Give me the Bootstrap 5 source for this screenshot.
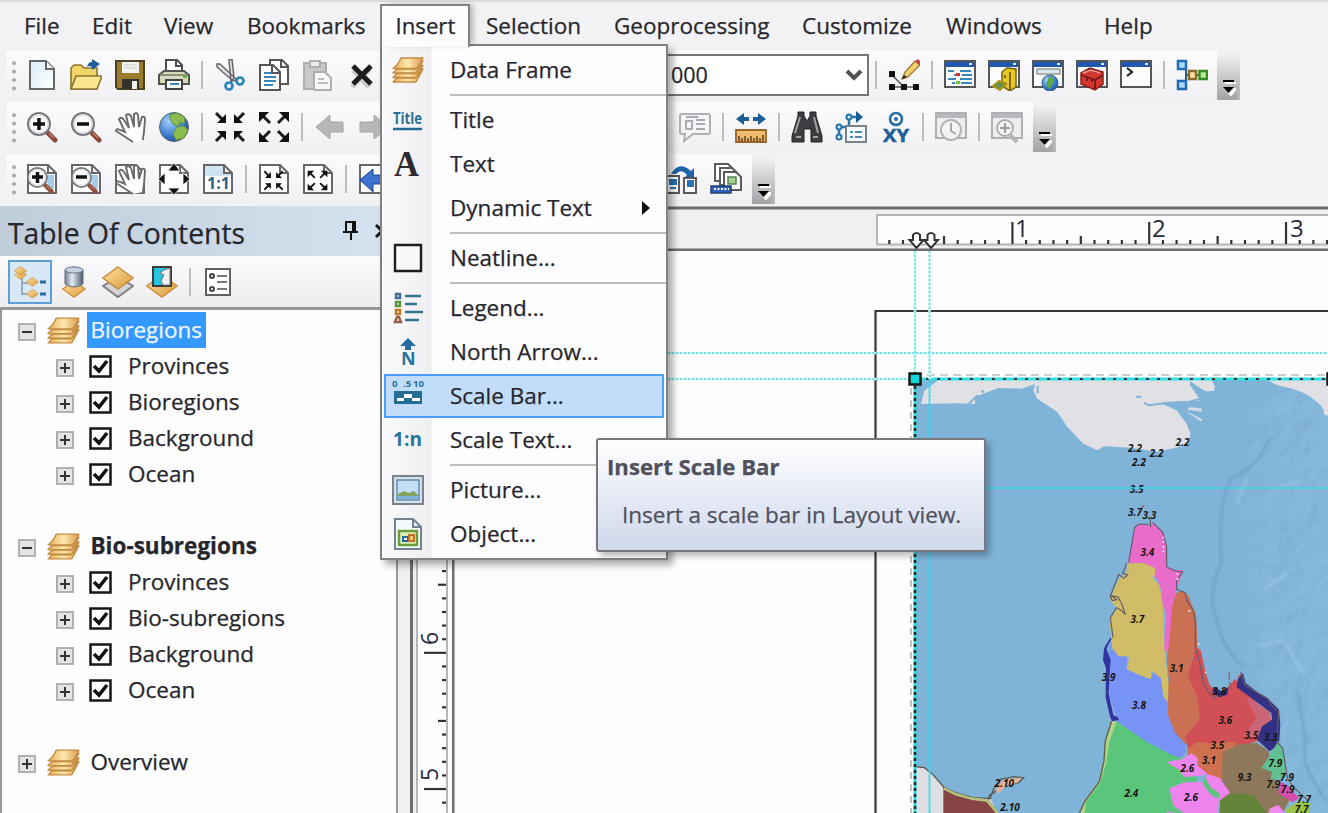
<!DOCTYPE html>
<html lang="en">
<head>
<meta charset="utf-8">
<title>Map layout</title>
<link href="https://cdn.jsdelivr.net/npm/bootstrap@5.3.0/dist/css/bootstrap.min.css" rel="stylesheet">
<style>
body{width:1328px;height:813px;overflow:hidden;background:#f2f1f4;font-family:"Open Sans","Noto Sans",sans-serif;font-size:22.5px;line-height:36px;color:#26262c;white-space:nowrap;-webkit-text-stroke:.25px}
svg{display:block;flex:none}
.app{height:813px;width:1328px;box-shadow:inset 0 2px #dbdadf}
.menubar{height:50px;padding:2px 0 0 24px;display:grid;grid-template-columns:68px 72px 83px 149px 90px 128px 188px 144px 158px 1fr;align-items:center}
.tools{height:52px;padding-left:6px}
.strip{height:50px;background:linear-gradient(#fcfbfd,#f0eff2);border-radius:5px 0 0 5px}
.grip{width:14px;height:32px;background:radial-gradient(circle,#aaaab0 1.7px,transparent 2.2px) 1px 0/14px 8.4px repeat-y}
.ico{width:44px;height:44px;display:flex;align-items:center;justify-content:center}
.ico svg{width:32px;height:32px}
.sp{width:12px;height:28px;background:linear-gradient(#bdbdc2,#bdbdc2) center/2px 100% no-repeat}
.more{width:23px;height:47px;background:linear-gradient(100deg,transparent 85%,#f2f1f455),linear-gradient(#f2f1f4,#a3a3a7);display:flex;align-items:flex-end;justify-content:center}
.combo{width:230px;height:42px;border:2px solid #77777b;background:#fff;font-size:21.5px;line-height:34px}
.work{height:607px}
.toc{width:380px;background:#fdfdfe}
.tochead{height:50px;background:linear-gradient(90deg,#c0cddb,#d5e2f0);font-size:28.3px;padding-left:8px}
.toctools{height:54px;border-bottom:3px solid #96969c;background:linear-gradient(#fbfbfc,#ededf0);padding-left:8px}
.selbox{background:#d9e8f7;border:2px solid #5f9ed6}
.tree{border-left:2px solid #96969c;width:396px;height:504px;background:#fdfdfe;padding-top:2px}
.node{height:36px;display:flex;align-items:center}
.lvl1{padding-left:16px}.lvl2{padding-left:54px}
.lvl1 .lyr{margin:0 7px 0 11px}.lvl2 .chk{margin:1px 12px 0 15px}
.exp{margin-top:4px}
.picked{background:#3399ff;color:#eef6ff}
.nm{padding:0 4px;line-height:36px}
.lvl1 .nm{padding-left:3.5px}
.flyout{position:absolute;left:380px;top:44px;width:288px;height:516px;border:2px solid #828286;background:linear-gradient(90deg,#fcfcfd 3px,#f9f9fb 4px,#efeff2 49px,#fdfcfe 50px);box-shadow:5px 5px 7px #0005;padding:2px 2px 0}
.tab{position:absolute;left:380px;top:4px;width:90px;height:43px;border:2px solid #828286;border-bottom:0;background:#fcfbfd;padding-left:13.5px;line-height:39px;box-shadow:5px -1px 6px -2px #0004;font-size:22.2px}
.mi{height:44px;display:flex;align-items:center;padding-left:8px}
.mi svg{width:32px;height:32px;margin-right:26px}
.rule{height:6px;margin:0 -2px 0 66px;background:linear-gradient(#bdbdc1,#bdbdc1) 0 2px/100% 2px no-repeat}
.hot{background:#c1ddfa;border:2px solid #4a9eff;padding-left:6px;margin-right:0}
.tip{position:absolute;left:596px;top:438px;width:390px;height:114px;border:2px solid #77777d;border-radius:3px;background:linear-gradient(#fff,#e7ebf6 50%,#ced8ea);box-shadow:4px 4px 6px #0004;color:#50505c;padding:9px 0 0 9px}
.tip div+div{margin:12px 0 0 15px}
</style>
</head>
<body>
<svg width="0" height="0" class="position-absolute">
<defs>
<linearGradient id="gold" x2="1" y2="1"><stop stop-color="#ffe2a0"/><stop offset="1" stop-color="#d99a3c"/></linearGradient>
<linearGradient id="gpage" x2="1" y2="1"><stop stop-color="#d8ecf8"/><stop offset="1" stop-color="#fff"/></linearGradient>
<radialGradient id="globe" cx=".35" cy=".3" r=".8"><stop stop-color="#a9d2ff"/><stop offset=".6" stop-color="#3b7ccf"/><stop offset="1" stop-color="#1c4a92"/></radialGradient>
<linearGradient id="cyl"><stop stop-color="#6f7f94"/><stop offset=".4" stop-color="#e3eaf3"/><stop offset="1" stop-color="#4d5a6e"/></linearGradient>
<linearGradient id="sheet" x2="1"><stop stop-color="#e0ac58"/><stop offset=".5" stop-color="#ffe9ae"/><stop offset="1" stop-color="#d5984a"/></linearGradient>
<symbol id="layers" viewBox="0 0 32 32"><g fill="url(#sheet)" stroke="#c48c42" stroke-width="1.300" stroke-linejoin="round"><path d="M1 28l4-4h18q4-3 6-9l2 0q-3 6-7 13z"/><path d="M1 23.500l4-4h19l5-8h2l-7 12z"/><path d="M1 19l4-4h19l5-8h2l-7 12z"/><path d="M1 14.500Q6 11 9 4h22q-3 8-7 10.500z"/></g></symbol>
<symbol id="page" viewBox="0 0 32 32"><path d="M4 2h16l8 8v20H4z" fill="url(#gpage)" stroke="#66666b" stroke-width="2"/><path d="M20 2v8h8" fill="#fff" stroke="#66666b" stroke-width="2"/></symbol>
<symbol id="pagew" viewBox="0 0 32 32"><path d="M2 2h20l8 8v20H2z" fill="#fff" stroke="#66666b" stroke-width="2"/><path d="M22 2v8h8" fill="none" stroke="#66666b" stroke-width="2"/></symbol>
<symbol id="mag" viewBox="0 0 32 32"><path d="M22 22l7 7" stroke="#8d4a3c" stroke-width="5" stroke-linecap="round"/><path d="M23 22l5 5" stroke="#c07c69" stroke-width="1.5"/><circle cx="13" cy="13" r="11" fill="#fbfbfd" stroke="#77777c" stroke-width="2"/><circle cx="13" cy="13" r="9" fill="none" stroke="#d5d5da"/></symbol>
<symbol id="hand" viewBox="0 0 32 32"><path d="M19 31Q10 25 2 20q0-3 4-1l5 2L5 8q2-3 5 1l5 8-3-13q3-2 5 1l3 11V3q3-2 4 1l1 12 3-10q3-1 3 2l-1 13q-1 5-1 8" fill="#fff" stroke="#6b6b6f" stroke-width="1.900"/></symbol>
<symbol id="in4" viewBox="0 0 32 32"><g stroke="#1b1b1e" stroke-width="3"><path d="M2 2l9 9M30 2l-9 9M2 30l9-9M30 30l-9-9"/></g><g fill="#111"><path d="M12 3v9H3zM20 3v9h9zM12 29v-9H3zM20 29v-9h9z"/></g></symbol>
<symbol id="out4" viewBox="0 0 32 32"><g stroke="#1b1b1e" stroke-width="3"><path d="M3 3l9 9M29 3l-9 9M3 29l9-9M29 29l-9-9"/></g><g fill="#111"><path d="M1 1h10L1 11zM31 1H21l10 10zM1 31h10L1 21zM31 31H21l10-10z"/></g></symbol>
<symbol id="win" viewBox="0 0 32 32"><path d="M1 2h30v26H1z" fill="#fafcfe" stroke="#55555a" stroke-width="2"/><path d="M2 3h28v5H2z" fill="#1f57ad"/><path d="M25 4h3v2h-3z" fill="#dfeaff"/></symbol>
<symbol id="winoff" viewBox="0 0 32 32"><path d="M1 2h30v25H1z" fill="#eeeef0" stroke="#b0b0b4" stroke-width="2"/><path d="M2 3h28v4H2z" fill="#b9b9bd"/></symbol>
<symbol id="chk" viewBox="0 0 23 23"><path d="M1.500 1.500h20v20h-20z" fill="#fff" stroke="#161618" stroke-width="2.500"/><path d="M5 11l5 5 8-10" fill="none" stroke="#111" stroke-width="3.600"/></symbol>
<symbol id="plus" viewBox="0 0 18 18"><path d="M1 1h16v16H1z" fill="#e4e4e4" stroke="#b1b1b1" stroke-width="2"/><path d="M4 9h10M9 4v10" stroke="#333" stroke-width="2"/></symbol>
<symbol id="minus" viewBox="0 0 18 18"><path d="M1 1h16v16H1z" fill="#e4e4e4" stroke="#b1b1b1" stroke-width="2"/><path d="M4 9h10" stroke="#333" stroke-width="2"/></symbol>
<symbol id="dia" viewBox="0 0 32 32"><path d="M16 1l15 11-15 11L1 12z" fill="url(#gold)" stroke="#c98f3d" stroke-width="1.5"/></symbol>
<symbol id="ovf" viewBox="0 0 14 18"><path d="M2 3h11M3 9h10l-5 6z" stroke="#fff" stroke-width="2" fill="#fff" transform="translate(1 2)"/><path d="M1 2h11v2H1z"/><path d="M1 9h11l-5.500 6z"/></symbol>
</defs></svg>

<div class="app">
 <nav class="menubar"><span>File</span><span>Edit</span><span>View</span><span>Bookmarks</span><span></span><span>Selection</span><span>Geoprocessing</span><span>Customize</span><span>Windows</span><span>Help</span></nav>

 <!-- Standard toolbar -->
 <div class="tools d-flex"><div class="strip d-flex align-items-center">
  <div class="grip"></div>
  <div class="ico"><svg><use href="#page"/></svg></div>
  <div class="ico"><svg viewBox="0 0 32 32"><path d="M1 30V9l3-3h7l3 3h13v21z" fill="#f0d668" stroke="#8c7530" stroke-width="1.6"/><path d="M6 17h26l-5 13H1z" fill="#fae58d" stroke="#8c7530" stroke-width="1.6"/><path d="M17 8q1-5 5-5V0l8 5-8 6V8q-3-2-5 0z" fill="#205d99"/></svg></div>
  <div class="ico"><svg viewBox="0 0 32 32"><path d="M2 2h28v28H4l-2-2z" fill="#9a7d2c" stroke="#4d4020" stroke-width="2"/><path d="M8 3h17v11H8z" fill="#f3f3f0"/><path d="M10 6h13M10 9h13" stroke="#ccc"/><path d="M8 20h17v10H8z" fill="#35322b"/><path d="M18 22h5v8h-5z" fill="#eee"/></svg></div>
  <div class="ico"><svg viewBox="0 0 32 32"><path d="M8 14V1h11l5 5v8" fill="#fff" stroke="#4e4e52" stroke-width="2"/><path d="M18 1v6h6" fill="none" stroke="#4e4e52" stroke-width="2"/><path d="M1 25v-9l5-4h20l5 4v9z" fill="#d6d9bd" stroke="#55554c" stroke-width="2"/><path d="M2 16h28" stroke="#8e9174" stroke-width="2"/><path d="M25 18h4" stroke="#5ac23c" stroke-width="2"/><path d="M8 21h16v9H8z" fill="#fff" stroke="#444" stroke-width="2"/><path d="M12 25h9" stroke="#3a86b8" stroke-width="2"/></svg></div>
  <div class="sp"></div>
  <div class="ico"><svg viewBox="0 0 32 32"><path d="M3 5l3 0 17 16-4 1L3 8zM15 1l3-1 2 19-3 4z" fill="#e3e3e6" stroke="#66666b" stroke-width="1.5"/><circle cx="15" cy="27" r="3.500" fill="none" stroke="#2a86b5" stroke-width="2.700"/><circle cx="26" cy="22" r="3.500" fill="none" stroke="#2a86b5" stroke-width="2.700"/></svg></div>
  <div class="ico"><svg viewBox="0 0 32 32"><path d="M12 1h12l6 6v18H12z" fill="#fff" stroke="#55555a" stroke-width="2"/><path d="M23 1v7h7" fill="none" stroke="#55555a" stroke-width="2"/><path d="M2 6h13l7 7v18H2z" fill="#fff" stroke="#55555a" stroke-width="2"/><path d="M14 6v8h8" fill="none" stroke="#55555a" stroke-width="2"/><path d="M6 14h7M6 18h12M6 22h12M6 26h9" stroke="#3a86b8" stroke-width="2"/></svg></div>
  <div class="ico"><svg viewBox="0 0 32 32"><path d="M2 4h22v26H2z" fill="#c8c8cb" stroke="#aeaeb2" stroke-width="2"/><path d="M8 2h10v6H8z" fill="#ececee" stroke="#aeaeb2" stroke-width="2"/><path d="M12 13h11l6 6v12H12z" fill="#f7f7f8" stroke="#b0b0b4" stroke-width="2"/><path d="M16 20h6M16 24h10" stroke="#bbb" stroke-width="2"/></svg></div>
  <div class="ico"><svg viewBox="0 0 32 32"><path d="M8 8l16 17M25 7L7 25" stroke="#ccc" stroke-width="5" transform="translate(-1 3)"/><path d="M7 7l18 18M25 7L7 25" stroke="#1d1d20" stroke-width="5"/></svg></div>
 </div>
 <div class="strip d-flex align-items-center rounded-0" style="width:833px">
  <div style="width:486px" class="d-flex"><div class="combo d-flex justify-content-between align-items-center" style="margin-left:23px;width:462px;flex:none"><span style="margin-left:262px">000</span><svg width="18" height="16" class="me-1" viewBox="0 0 18 16"><path d="M2 4l7 7 7-7" fill="none" stroke="#515156" stroke-width="4"/></svg></div></div>
  <div class="sp"></div>
  <div class="ico"><svg viewBox="0 0 32 32"><path d="M3 15l12 12M4 28h26" stroke="#555" stroke-width="1.500" fill="none"/><path d="M1 12h6v6H1zM1 25h6v6H1zM13 25h6v6h-6zM25 25h6v6h-6z" fill="#111"/><path d="M14 20l3-7L27 2l5 4-12 12z" fill="#f3cf6a" stroke="#967032" stroke-width="1.200"/><path d="M27 2l3-2 4 4-2 3z" fill="#ce4646"/><path d="M14 20l2-4 3 2z" fill="#222"/></svg></div>
  <div class="sp"></div>
  <div class="ico"><svg viewBox="0 0 32 32"><use href="#win"/><path d="M4 12h6M16 12h11M10 16h4M18 16h10M4 20h8M16 20h12M8 24h3M17 24h11" stroke="#3688bb" stroke-width="2"/><path d="M12 14h4v3h-4z" fill="#c33"/><path d="M12 22h4v3h-4z" fill="#7b3"/></svg></div>
  <div class="ico"><svg viewBox="0 0 32 32"><use href="#win"/><path d="M14 13l5-4 9 1v18l-6 4-8-5z" fill="#e8c829" stroke="#75620d" stroke-width="1.500"/><path d="M22 13v18M17 16v3M17 23v3" stroke="#806a10" stroke-width="2"/><path d="M5 27l6-5 7 3-6 6z" fill="#639154" stroke="#a5951a" stroke-width="2"/></svg></div>
  <div class="ico"><svg viewBox="0 0 32 32"><use href="#win"/><path d="M5 10h23v5H5z" fill="#dbe9f4" stroke="#999" stroke-width="1.500"/><circle cx="18" cy="24" r="8" fill="url(#globe)" stroke="#38648f"/><path d="M17 17q7 2 4 7t-3 7q-5-4-3-8z" fill="#59a845"/></svg></div>
  <div class="ico"><svg viewBox="0 0 32 32"><use href="#win"/><path d="M5 14l9-5 13 4v12l-8 6-14-6z" fill="#d2382f" stroke="#8c1e1a" stroke-width="1.500"/><path d="M5 16l14 5 8-5M19 21v9M10 12q6-5 11 2M11 17v5M16 19v4" fill="none" stroke="#751a18" stroke-width="1.800"/><path d="M7 14l8-3 9 3" stroke="#f49c90" fill="none" stroke-width="1.500"/></svg></div>
  <div class="ico"><svg viewBox="0 0 32 32"><use href="#win"/><path d="M7 9l5 4-5 4" fill="none" stroke="#222" stroke-width="2.200"/></svg></div>
  <div class="sp"></div>
  <div class="ico"><svg viewBox="0 0 32 32"><path d="M10 6v20M10 16h20" stroke="#265f84" stroke-width="2"/><g stroke-width="2.500"><path d="M2 2h8v8H2zM2 22h8v8H2z" fill="#a6dcff" stroke="#216ab5"/><path d="M13 12h7v8h-7z" fill="#ffe3a3" stroke="#8b6928"/><path d="M23.500 12h7.500v8h-7.500z" fill="#b9ed8b" stroke="#378c2a"/></g></svg></div>
 </div>
 <div class="more pb-1" style="margin-top:3px"><svg width="14" height="18"><use href="#ovf"/></svg></div></div>

 <!-- Tools toolbar -->
 <div class="tools d-flex"><div class="strip d-flex align-items-center">
  <div class="grip"></div>
  <div class="ico"><svg viewBox="0 0 32 32"><use href="#mag"/><path d="M7 13h12M13 7v12" stroke="#111" stroke-width="3.500"/></svg></div>
  <div class="ico"><svg viewBox="0 0 32 32"><use href="#mag"/><path d="M7 13h12" stroke="#111" stroke-width="3.500"/></svg></div>
  <div class="ico"><svg><use href="#hand"/></svg></div>
  <div class="ico"><svg viewBox="0 0 32 32"><circle cx="16" cy="16" r="14.500" fill="url(#globe)" stroke="#55646f"/><path d="M12 4q5-3 10-1l5 4-1 6-4-2-2 4-5-2-3-5zM19 16l7-1 4 4-4 8-8 2-3-6z" fill="#8dbb4d" stroke="#5f9440"/></svg></div>
  <div class="sp"></div>
  <div class="ico"><svg><use href="#in4"/></svg></div>
  <div class="ico"><svg><use href="#out4"/></svg></div>
  <div class="sp"></div>
  <div class="ico"><svg viewBox="0 0 32 32"><path d="M2 16L16 4v7h13v10H16v7z" fill="#b7b7ba" stroke="#a4a4a8"/></svg></div>
  <div class="ico"><svg viewBox="0 0 32 32"><path d="M30 16L16 4v7H2v10h14v7z" fill="#b7b7ba" stroke="#a4a4a8"/></svg></div>
 </div>
 <div class="strip d-flex align-items-center rounded-0" style="padding-left:277px;width:637px">
  <div class="ico"><svg viewBox="0 0 32 32"><path d="M3 3h26q2 0 2 2v16q0 2-2 2H14l-9 7 1-7H3q-2 0-2-2V5q0-2 2-2z" fill="#f5f5f7" stroke="#afafb4" stroke-width="2"/><path d="M7 10h6v8H7zM17 9h9M17 13h9M17 18h9M7 6h12" fill="none" stroke="#aaaab0" stroke-width="2"/></svg></div>
  <div class="sp"></div>
  <div class="ico"><svg viewBox="0 0 32 32"><path d="M1 8l8-6v4h5v4H9v4zM31 8l-8-6v4h-5v4h5v4z" fill="#195c96"/><path d="M1 19h30v12H1z" fill="#f0bd70" stroke="#98642c" stroke-width="1.800"/><path d="M4 30v-5M7 30v-3M10 30v-5M13 30v-3M16 30v-5M19 30v-3M22 30v-5M25 30v-3M28 30v-6" stroke="#5b3b16" stroke-width="1.500"/></svg></div>
  <div class="sp"></div>
  <div class="ico"><svg viewBox="0 0 32 32"><path d="M7 1h6v4l3 5 3-5V1h6v4l6 20v6H20V18h-7v13H1v-6L7 5z" fill="#3d3d42" stroke="#232326"/><path d="M5 26h5M22 26h5M9 6l-5 16M23 6l4 16" stroke="#a1a1a5" stroke-width="2"/></svg></div>
  <div class="ico"><svg viewBox="0 0 32 32"><path d="M4 26V16h10V6h10" fill="none" stroke="#2474a7" stroke-width="2.500"/><path d="M21 0l7 6-7 6z" fill="#175c92"/><circle cx="4" cy="16" r="2.500" fill="#d8efff" stroke="#2474a7" stroke-width="2"/><circle cx="4" cy="26" r="2.500" fill="#d8efff" stroke="#2474a7" stroke-width="2"/><circle cx="14" cy="6" r="2.500" fill="#d8efff" stroke="#2474a7" stroke-width="2"/><path d="M11 15h20v16H11z" fill="#f6fafd" stroke="#79828a" stroke-width="2"/><path d="M15 21h3M20 21h7M15 26h3M20 26h7" stroke="#4b8cb6" stroke-width="2"/></svg></div>
  <div class="ico"><svg viewBox="0 0 32 32" overflow="visible"><circle cx="17" cy="8" r="6" fill="none" stroke="#246ba1" stroke-width="2.500"/><circle cx="17" cy="8" r="2" fill="#246ba1"/><text x="4" y="30.500" font-size="17" font-weight="700" fill="#1d5f99" stroke="#1d5f99" stroke-width=".5" textLength="26" lengthAdjust="spacingAndGlyphs">XY</text></svg></div>
  <div class="sp"></div>
  <div class="ico"><svg viewBox="0 0 32 32"><use href="#winoff"/><circle cx="16" cy="19" r="10" fill="#f4f4f6" stroke="#b4b4b8" stroke-width="2"/><path d="M16 12v8l5 3" fill="none" stroke="#a8a8ac" stroke-width="2"/></svg></div>
  <div class="sp"></div>
  <div class="ico"><svg viewBox="0 0 32 32"><use href="#winoff"/><path d="M19 24l7 7" stroke="#b4b4b8" stroke-width="4"/><circle cx="14" cy="17" r="8" fill="#f4f4f6" stroke="#aeaeb2" stroke-width="2"/><path d="M9 17h10M14 12v10" stroke="#9c9ca0" stroke-width="2"/></svg></div>
 </div>
 <div class="more pb-1" style="margin-top:3px"><svg width="14" height="18"><use href="#ovf"/></svg></div></div>

 <!-- Layout toolbar -->
 <div class="tools d-flex"><div class="strip d-flex align-items-center">
  <div class="grip"></div>
  <div class="ico"><svg viewBox="0 0 32 32"><use href="#pagew"/><path d="M21 12h7v14h-6z" fill="#a5cdea"/><use href="#mag" width="28" height="28" y="3"/><path d="M6 14h11M11.500 9v11" stroke="#111" stroke-width="3.500"/></svg></div>
  <div class="ico"><svg viewBox="0 0 32 32"><use href="#pagew"/><path d="M21 12h7v14h-6z" fill="#a5cdea"/><use href="#mag" width="28" height="28" y="3"/><path d="M6 14h11" stroke="#111" stroke-width="3.500"/></svg></div>
  <div class="ico"><svg viewBox="0 0 32 32"><use href="#pagew"/><use href="#hand"/></svg></div>
  <div class="ico"><svg viewBox="0 0 32 32"><use href="#pagew"/><path d="M16 0l-6 8h12zM16 32l-6-7h12zM0 16l7-6v12zM32 16l-7-6v12z" fill="#111" stroke="#fff" stroke-width=".8"/></svg></div>
  <div class="ico"><svg viewBox="0 0 32 32"><use href="#pagew"/><path d="M3 3h18v7h8v3H3z" fill="#cde3f2"/><path d="M22 3v7h7" fill="none" stroke="#66666b" stroke-width="2"/><text x="5" y="26" font-size="16" font-weight="700" fill="#2a5f87" textLength="23">1:1</text></svg></div>
  <div class="sp"></div>
  <div class="ico"><svg viewBox="0 0 32 32"><use href="#pagew"/><use href="#in4" x="5" y="7" width="21" height="21"/></svg></div>
  <div class="ico"><svg viewBox="0 0 32 32"><use href="#pagew"/><use href="#out4" x="5" y="7" width="21" height="21"/></svg></div>
  <div class="sp"></div>
  <div class="ico"><svg viewBox="0 0 32 32"><path d="M2 2h28v28H2z" fill="#fff" stroke="#66666b" stroke-width="2"/><path d="M2 17L15 6v6h17v9H15v8z" fill="#3e74cf" stroke="#173f92"/></svg></div>
 </div>
 <div class="strip d-flex align-items-center rounded-0" style="padding-left:264px;width:356px">
  <div class="ico"><svg viewBox="0 0 32 32"><path d="M5 11q8-14 20-3l3-3v11H17l4-4q-6-7-11-1z" fill="#1f64a4"/><path d="M1 13h12v17H1zM18 15h12v15H18z" fill="#fff" stroke="#5a5a60" stroke-width="2"/><path d="M4 17h6v4H4zM4 25h6M22 18h5v5h-5z" stroke="#2a72b0" stroke-width="2" fill="#2a72b0"/></svg></div>
  <div class="ico"><svg viewBox="0 0 32 32"><g fill="#fff" stroke="#5a5a60" stroke-width="2"><path d="M5 1h13l5 5v12H5z"/><path d="M10 5h12l5 5v12H10z"/><path d="M14 9h12l5 5v13H14z"/></g><path d="M18 14h8v7h-8z" fill="#a5cf90" stroke="#51844e" stroke-width="1.500"/><path d="M1 23h20v7H1z" fill="#2e62bb" stroke="#283f72" stroke-width="1.500"/><path d="M4 26h15" stroke="#fff" stroke-width="2" stroke-dasharray="2 1.500"/></svg></div>
 </div>
 <div class="more pb-1" style="margin-top:3px"><svg width="14" height="18"><use href="#ovf"/></svg></div></div>

 <!-- Contents panel, rulers and layout view -->
 <div class="work d-flex">
  <div style="width:396px" class="flex-shrink-0 overflow-hidden">
   <div class="tochead d-flex align-items-center"><span style="width:335px;padding-top:4px">Table Of Contents</span><svg width="16" height="20" viewBox="0 0 16 20"><path d="M3 11V1h9v10M0 11h15M8 11v8M10 1v10" fill="none" stroke="#111" stroke-width="2"/></svg><svg width="14" height="16" class="ms-3" viewBox="0 0 14 16"><path d="M1 2l12 12M13 2L1 14" stroke="#111" stroke-width="3"/></svg></div>
   <div class="toctools d-flex align-items-center">
    <div class="ico selbox"><svg viewBox="0 0 32 32"><path d="M8 8v20h7M8 17h8" fill="none" stroke="#96aac1" stroke-width="2"/><use href="#dia" x="0" y="3" width="13" height="15"/><use href="#dia" x="0" y="-1" width="13" height="15"/><use href="#dia" x="12" y="10" width="13" height="15"/><use href="#dia" x="12" y="22" width="13" height="15"/><path d="M26 16h6M26 28h6" stroke="#24719f" stroke-width="3"/></svg></div>
    <div class="ico"><svg viewBox="0 0 32 32"><use href="#dia" x="4" y="13" width="24" height="26"/><path d="M7 4q9-6 18 0v14q-9 6-18 0z" fill="url(#cyl)" stroke="#606b7d"/><ellipse cx="16" cy="4" rx="9" ry="3" fill="#c9d3e0" stroke="#6a778a"/></svg></div>
    <div class="ico"><svg viewBox="0 0 32 32"><path d="M1 20l15-9 15 9-15 11z" fill="#d5d5d8" stroke="#808085" stroke-width="2"/><use href="#dia"/></svg></div>
    <div class="ico"><svg viewBox="0 0 32 32"><use href="#dia" y="8"/><path d="M7 1h18v19H7z" fill="#28c5df" stroke="#3c3c42" stroke-width="2"/><path d="M24 2v17h-7l-2-4 3-6-4-2 4-3z" fill="#f2f2f2" stroke="#777"/></svg></div>
    <div class="sp"></div>
    <div class="ico"><svg viewBox="0 0 32 32"><path d="M4 3h24v26H4z" fill="#fff" stroke="#606066" stroke-width="2"/><circle cx="10" cy="10" r="2" fill="none" stroke="#444" stroke-width="2"/><circle cx="10" cy="23" r="2" fill="none" stroke="#444" stroke-width="2"/><path d="M15 10h10M15 16h10M15 23h10" stroke="#777" stroke-width="2"/></svg></div>
   </div>
   <div class="tree" id="tree"></div>
  </div>
  <svg width="20" height="607" viewBox="396 206 20 607"><path d="M396 206h20v607h-20z" fill="#f0eff1"/><path d="M397 256v557" stroke="#97979b" stroke-width="2"/><path d="M411.500 206v607" stroke="#6d6d71" stroke-width="3"/></svg>
  <div class="flex-grow-1">
   <svg width="912" height="45" viewBox="416 206 912 45" id="hr"><path d="M416 206h912v45H416z" fill="#f0eff1"/><path d="M416 208h912M416 250h912" stroke="#6e6e72" stroke-width="3"/><path d="M877 245v-30h460v29.500H877" fill="#fdfdfe" stroke="#b4b4b8" stroke-width="2"/></svg>
   <div class="d-flex">
    <svg width="36" height="562" viewBox="416 251 36 562" id="vr"><path d="M416 251h36v562h-36z" fill="#fdfdfe"/><path d="M417 251v562M447 251v562" stroke="#b4b4b8" stroke-width="2"/></svg>
    <svg width="876" height="562" viewBox="452 251 876 562" id="map">
     <defs>
      <filter id="soft"><feGaussianBlur stdDeviation="4"/></filter>
      <filter id="relief" x="0" y="0" width="1" height="1"><feTurbulence type="fractalNoise" baseFrequency=".035 .03" numOctaves="4" seed="8"/><feColorMatrix values="0 0 0 0 .5  0 0 0 0 .5  0 0 0 0 .5  1 0 0 0 0" result="n"/><feDiffuseLighting surfaceScale="3" diffuseConstant="1.1" lighting-color="#8cbfe0" in="n"><feDistantLight azimuth="225" elevation="60"/></feDiffuseLighting></filter>
      <linearGradient id="fade"><stop stop-color="#000"/><stop offset=".3" stop-color="#555"/><stop offset="1" stop-color="#777"/></linearGradient>
      <mask id="deep"><path d="M1240 410q40-25 90-20v423h-40q0-90-40-145-45-110 0-258z" fill="url(#fade)"/></mask>
     </defs>
     <path d="M452 251h876v562H452z" fill="#fdfdfe"/>
     <path d="M453 251v562" stroke="#6e6e72" stroke-width="3"/>
     <path d="M1328 311H875.500v502" fill="none" stroke="#38383b" stroke-width="2.200"/>
     <path d="M915 380h413v433H915z" fill="#80b3d8"/>
     <g mask="url(#deep)"><path d="M1200 380h128v433h-128z" filter="url(#relief)"/></g>
     <g transform="translate(860 200) scale(.33333)" fill="#e1e1e5">
      <path d="M1225 540q20 16 48 20 62 12 98 46 25 20 20 36l13 6V540z"/>
      <path d="M235 540h755l0 14 32 42-2 6-50 2-70 5 50 22 30 40 12 30-10 34-90 20-80-12-80-4-20 12-42-20-48-50-30-45-60-40-12-24 5-20-40 14-70-2-70 26v22l-52-2-110 2 10-40z"/>
      <path d="M985 540h70l10 20-3 12-25 2-25-15z"/>
      <path d="M985 622l40 3v10l-42-5zM972 630l55 28-5 6z" opacity=".85"/>
      <path d="M533 558v22M365 570l6 8M372 624l-2-24-20-12-28 28M828 590h16M852 608l14 8 60-8 60-2 36-10-30-44" fill="none" stroke="#80b3d8" stroke-width="6"/>
     </g>
     <g transform="translate(880 430) scale(.33333)">
      <g fill="none" filter="url(#soft)"><path d="M1170 20Q1140 110 1060 140 1010 200 1025 400 980 480 1010 570 1030 660 1090 710M1250 780Q1280 900 1275 1000 1310 1080 1344 1120" stroke="#5587a9" stroke-width="6" opacity=".5"/><path d="M1100 150l-30 70M1200 170l70-20M1150 480l70-50M1130 650l80-20 60 100" stroke="#b9dcf2" stroke-width="8" opacity=".35"/></g>
      <path d="M103 1010l30 3 23 18 35 40 35 17 50 14 55 5 22 42H103z" fill="#dfdee2"/>
      <path d="M190 1070l36 18 50 14 40 10 35 37H190z" fill="#874444"/>
      <path d="M103 1010l30 3 23 18 35 40 35 17 50 14 55 4 12-34 20-25 40-7 28 3-14 14-50 16-38 22-5 16 22 27" fill="none" stroke="#5c5850" stroke-width="4"/>
      <path d="M192 1075l34 17 50 14 46 6 30 37" fill="none" stroke="#b5c17a" stroke-width="8"/>
      <path d="M348 1085l5-22 24-15 48-5-10 14-38 12-20 20z" fill="#e6b296"/>
      <!-- green west -->
      <path d="M608 1149l8-34 39-60 25-95 12-82 28-4 40 14 86 60 40 24 60 24 12 153z" fill="#59c67c"/>
      <path d="M695 873l-19 60-4 56-14 62-42 60-14 38h12l4-32 42-58 18-58 10-66 22-60z" fill="#b2d486"/>
      <path d="M695 873l-19 60-4 60-14 62-44 60-16 34" fill="none" stroke="#665f49" stroke-width="4"/>
      <!-- blue -->
      <path d="M690 628l7 30 45 20-2 37 72 32 8-22 35 10 7 80 8 50 50 50-2 50-18 20-35-15-65-35-88-60-22-75-7-80z" fill="#7893f6"/>
      <path d="M690 625l-18 30-3 35 9 25-1 88 14 60 6 11 20-4-4-8-13-6-14-66 4-78 2-22-12-32 4-12 12-22z" fill="#33339f"/>
      <!-- yellow -->
      <path d="M742 402l45-5 38 14 3 30-13-1 23 25 10 50 2 45 2 60 3 45 7 75 6 35-6 40-12-15-7-55-28-23-3 26-34-13-38-17 8-38-33-2-18-23-5-55-4-30 24-35-22-25 5-15 20-45 25-25z" fill="#d1bd67"/>
      <!-- pink -->
      <path d="M764 292l15-9 26 4 5-10 18 8 23 24 9 36v62l18 12 30 1-8 30-12 33-12 60-3 85-8 40-12-8 1-53 5-52-13-44-2-32-11-30-10-10 4-24-38-17-45 2 12-60z" fill="#e96bca"/>
      <!-- orange -->
      <path d="M888 490l20-8 18 15 12 35 10 18 5 100-18 40 8 75 20 70-2 90-30 25-18-12-28-30-22-55 3-108-6-60 8-44 8-110z" fill="#cc7053"/>
      <!-- red -->
      <path d="M948 650l14 10 14 64 12 40 32 32 18-20 28-30 40 50 45 40 18 35-30 60-60 20-45 22-42-2-68-12-7-40 42-50-5-60-30-75z" fill="#d15055"/>
      <path d="M1100 800l70 45 4 28-28 30-5 20-50-5 40-55-25-40z" fill="#ca6577"/>
      <path d="M1000 770l26 14 20-12-4 22-25 8-20-14zM1075 740l14-10 8 30 40 30 25 14 35 35 4 45-4 60-28 20-38-35 15-40 30-20-2-20-60-45-44-32z" fill="#333184"/>
      <!-- lower mosaics -->
      <path d="M922 960l28-24 40 4 75-5 5 95-28 30-62-25-42-18-16-44z" fill="#cf704f"/>
      <path d="M1028 965l50-22 52-5 35 24 28 110 35 40-20 37h-190l6-70z" fill="#8e785b"/>
      <path d="M1195 932l20 50 2 60-45 8 4-25-32-10 20-30z" fill="#62bf91"/>
      <path d="M1020 1110l40-22 60 6 40 55h-140z" fill="#648539"/>
      <path d="M1170 1135l25-10 20 24h-50z" fill="#ef8aef"/>
      <path d="M1200 1055l22 10 35 40-20 12-42-28z" fill="#d64caf"/>
      <path d="M1215 1140l42-26 35 5-4 30h-66z" fill="#9ac448"/>
      <path d="M860 996l44-8 30-18 20 14-2 22 34 28-34 4-40 3-14-22z" fill="#ee85ee"/>
      <path d="M868 1075l45-18 60-2 10-22 36 10 31 45-34 26-2 35H910l-30-22z" fill="#ee85ee"/>
      <path d="M975 1042l18 32 22 12 4 22-24-12-28-34z" fill="#59c67c"/>
      <path d="M860 1144l30 5h-30z" fill="#ee85ee"/>
      <path d="M746 396l18-104 13-10 28 2M810 262l2 30M818 278l30 28 12 45v60l26 12 22 3-18 25v28l25 8 6 25 17 25 8 35v85l10 30 14 68 14 30 22 22M740 400l-12 30 15 5-12 10-15-12-25 65 5 14 14-3-16-12 20 4 12 22 10 30-12-12-15-8-18 30 8 60M1082 725l12 40 70 42 12 22 20 16-6 90 18 20 14 88 14 24 45 42" fill="none" stroke="#645c65" stroke-width="3.500"/>
      <path d="M850 320v50M892 430v24M928 540v12M956 640v14M977 725v14" stroke="#f8eef4" stroke-width="5" stroke-dasharray="5 9"/>
      <path d="M1048 725v24M1048 755l5 25M782 238l10-12M1075 745l10-15" stroke="#a65b63" stroke-width="4"/>
      <g id="codes" font-family="Open Sans, sans-serif" font-size="30" font-weight="700" font-style="italic" text-anchor="middle" fill="#16160f"></g>
     </g>
     <g fill="none"><path d="M915 379h413" stroke="#2ee0e2" stroke-width="3"/><path d="M915 379h413" stroke="#37383a" stroke-width="2" stroke-dasharray="3 8"/><path d="M927 375h401" stroke="#c0bcb7" stroke-width="1.600" stroke-dasharray="8 5"/><path d="M915 386v427" stroke="#2cd8d8" stroke-width="3"/><path d="M915 386v427" stroke="#252628" stroke-width="2.500" stroke-dasharray="3 3"/><path d="M911 388v425" stroke="#adb4b5" stroke-width="1.600" stroke-dasharray="7 5"/>
     <g stroke="#c4f7f5" stroke-width="2.600"><path d="M915 251v122M929.500 251v128M452 353h876M452 379h457"/></g><g stroke="#5adcdc" stroke-width="1.300" stroke-dasharray="2 2"><path d="M915 251v122M929.500 251v562M452 353h876M452 379h457"/></g><path d="M929.500 380v562M980 488h348" stroke="#30d8ec" stroke-width="2.200" opacity=".6"/></g>
     <path d="M909.500 373.500h11v11h-11zM1327.500 373.500h10v11h-10z" fill="#0cd9d9" stroke="#151515" stroke-width="2.500"/>
    </svg>
   </div>
  </div>
 </div>
</div>

<!-- Open Insert menu -->
<div class="flyout" id="flyout">
 <div class="mi"><svg><use href="#layers"/></svg>Data Frame</div><div class="rule"></div>
 <div class="mi"><svg viewBox="0 0 32 32"><text x="1" y="20" font-size="16" font-weight="700" fill="#286f95" textLength="29" lengthAdjust="spacingAndGlyphs">Title</text><path d="M1 25h29" stroke="#206a91" stroke-width="2.500"/></svg>Title</div>
 <div class="mi"><svg viewBox="0 0 32 32"><text x="2" y="28" font-size="36" font-weight="700" fill="#2c2c30" font-family="Liberation Serif,serif" textLength="25" lengthAdjust="spacingAndGlyphs">A</text></svg>Text</div>
 <div class="mi">
  <span style="width:58px"></span>Dynamic Text<svg style="width:12px;height:16px;margin:0 12px 0 auto" viewBox="0 0 12 16"><path d="M2 1l8 7-8 7z" fill="#111"/></svg></div><div class="rule"></div>
 <div class="mi"><svg viewBox="0 0 32 32"><path d="M3 3h26v26H3z" fill="#f8f8fa" stroke="#1d1d20" stroke-width="2.400"/></svg>Neatline...</div><div class="rule"></div>
 <div class="mi"><svg viewBox="0 0 32 32"><path d="M13 4h16M13 12h12M13 20h18M13 28h14" stroke="#31748f" stroke-width="2.600"/><g fill="#fff" stroke-width="2.400"><path d="M4 2h4v4H4z" stroke="#3e6a95"/><path d="M4 10h4v4H4z" stroke="#5c963c"/><path d="M4 18h4v4H4z" stroke="#c17b26"/><path d="M3 30l2-5h2l2 5z" stroke="#9b5d43"/></g></svg>Legend...</div>
 <div class="mi"><svg viewBox="0 0 32 32"><path d="M16 2l8 8h-5v4h-6v-4H8z" fill="#226e9c"/><text x="9" y="29" font-size="18" font-weight="700" fill="#27759c">N</text></svg>North Arrow...</div>
 <div class="mi hot"><svg viewBox="0 0 32 32" overflow="visible"><g font-size="9.500" font-weight="700" fill="#286f95"><text x="0" y="7">0</text><text x="11" y="7">.5</text><text x="21" y="7">10</text></g><path d="M2 11h28v13H2z" fill="#246e94"/><path d="M5 18h7v3H5zM12 14h8v4h-8zM20 18h8v3h-8z" fill="#fff"/></svg>Scale Bar...</div>
 <div class="mi"><svg viewBox="0 0 32 32"><text x="1" y="22" font-size="19" font-weight="700" fill="#27759c" textLength="29">1:n</text></svg>Scale Text...</div><div class="rule"></div>
 <div class="mi"><svg viewBox="0 0 32 32"><path d="M1 2h30v28H1z" fill="#d8e1e9" stroke="#77838d" stroke-width="2"/><path d="M5 6h22v20H5z" fill="#c2dff5" stroke="#628eaf" stroke-width="1.500"/><path d="M6 20l6-3 5 2 5-2 4 4v1H6z" fill="#81a260"/><path d="M6 22h20v3H6z" fill="#7eb3da"/></svg>Picture...</div>
 <div class="mi"><svg viewBox="0 0 32 32"><path d="M3 1h18l8 8v22H3z" fill="#f5fafd" stroke="#73818c" stroke-width="2"/><path d="M21 1v8h8" fill="none" stroke="#73818c" stroke-width="2"/><path d="M7 13h18v14H7z" fill="#dfeebc" stroke="#6c9f3c" stroke-width="2.500"/><path d="M11 19h5v4h-5z" fill="#fff" stroke="#286b9a" stroke-width="2"/><path d="M17 17h5v6h-5z" fill="#f6c47c" stroke="#c1701d" stroke-width="2"/></svg>Object...</div>
</div>
<div class="tab">Insert</div>
<div class="tip"><div class="fw-bold" style="font-size:22.200px">Insert Scale Bar</div><div>Insert a scale bar in Layout view.</div></div>

<script src="https://cdn.jsdelivr.net/npm/bootstrap@5.3.0/dist/js/bootstrap.bundle.min.js"></script>
<script>
const groups=[['Bioregions','minus',['Provinces','Bioregions','Background','Ocean'],'picked'],['Bio-subregions','minus',['Provinces','Bio-subregions','Background','Ocean'],'fw-bold'],['Overview','plus',[],'']];
document.getElementById('tree').innerHTML=groups.map(([n,s,kids,c])=>`<div class="node lvl1"><svg class="exp" width="18" height="18"><use href="#${s}"/></svg><svg class="lyr" width="33" height="33"><use href="#layers"/></svg><span class="nm ${c}">${n}</span></div>`+kids.map(k=>`<div class="node lvl2"><svg class="exp" width="18" height="18"><use href="#plus"/></svg><svg class="chk" width="23" height="23"><use href="#chk"/></svg><span class="nm">${k}</span></div>`).join('')).join('<div class="node"></div>');
// ruler ticks, one tenth of an inch apart
let h='';for(let i=0;i<33;i++){const x=889.3+i*13.68,m=(i+1)%10;h+=`<path d="M${x} 244v${m==0?-22:m==5?-8:-4}" stroke="#333" stroke-width="2.200"/>`}
h+='<g font-size="24" fill="#29293a"><text x="1015" y="237">1</text><text x="1152" y="237">2</text><text x="1290" y="237">3</text></g><g fill="#fff" stroke="#333" stroke-width="2"><path d="M913 240v-5q1-2 3.500-2t3.500 2v5h3.500l-7 8-7-8z"/><path d="M927.500 240v-5q1-2 3.500-2t3.500 2v5h3.500l-7 8-7-8z"/></g>';
document.getElementById('hr').innerHTML+=h;
let v='';for(let i=0;i<20;i++){const y=557.5+i*13.62,m=(i+3)%10;v+=`<path d="M446 ${y}h${m==0?-22:m==5?-8:-4}" stroke="#333" stroke-width="2.200"/>`}
v+='<g font-size="23" fill="#29293a"><text transform="translate(437.500 645) rotate(-90)">6</text><text transform="translate(437.500 781) rotate(-90)">5</text></g>';
document.getElementById('vr').innerHTML+=v;
const codes=[[765,65,'2.2'],[830,82,'2.2'],[908,47,'2.2'],[777,107,'2.2'],[770,190,'3.5'],[765,257,'3.7'],[808,268,'3.3'],[802,377,'3.4'],[772,580,'3.7'],[890,725,'3.1'],[686,754,'3.9'],[777,838,'3.8'],[1018,796,'3.8'],[1036,881,'3.6'],[1114,928,'3.5'],[1172,933,'3.3'],[1012,957,'3.5'],[987,1001,'3.1'],[922,1025,'2.6'],[754,1102,'2.4'],[933,1114,'2.6'],[1094,1054,'9.3'],[1186,1011,'7.9'],[1221,1054,'7.9'],[1180,1073,'7.9'],[1223,1089,'7.9'],[1272,1118,'7.7'],[1265,1149,'7.7'],[373,1072,'2.10'],[390,1144,'2.10']];
document.getElementById('codes').innerHTML=codes.map(c=>`<text x="${c[0]}" y="${c[1]}">${c[2]}</text>`).join('');
</script>
</body>
</html>
